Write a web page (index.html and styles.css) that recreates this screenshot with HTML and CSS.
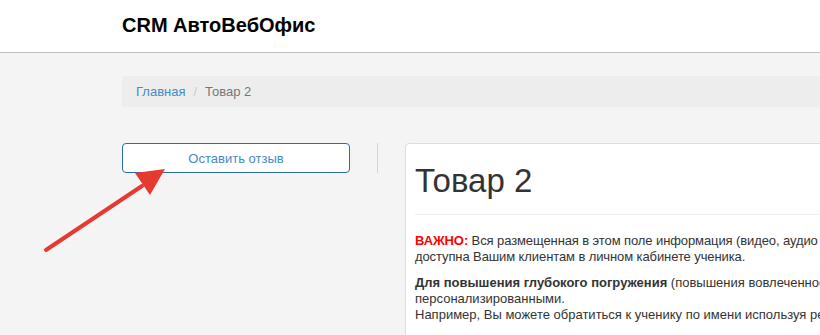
FILE: index.html
```html
<!DOCTYPE html>
<html lang="ru">
<head>
<meta charset="utf-8">
<title>CRM АвтоВебОфис</title>
<link rel="stylesheet" href="styles.css">
</head>
<body>
<header class="topbar">
  <div class="brand">CRM АвтоВебОфис</div>
</header>
<main class="page">
  <nav class="crumbs">
    <a class="crumb-link" href="#">Главная</a>
    <span class="crumb-sep">/</span>
    <span class="crumb-current">Товар 2</span>
  </nav>
  <div class="cols">
    <aside class="side">
      <button class="review-btn" type="button">Оставить отзыв</button>
    </aside>
    <div class="divider"></div>
    <section class="card">
      <h1 class="title">Товар 2</h1>
      <hr class="rule">
      <p class="para para-first"><b class="warn">ВАЖНО:</b> Вся размещенная в этом поле информация (видео, аудио и текст) будет доступна Вашим клиентам в личном кабинете ученика.</p>
      <p class="para para-second"><b>Для повышения глубокого погружения</b> (повышения вовлеченности) делайте материалы персонализированными.<br>Например, Вы можете обратиться к ученику по имени используя регулярные выражения.</p>
    </section>
  </div>
  <svg class="arrow" width="140" height="100" viewBox="0 0 140 100">
    <line x1="16" y1="90" x2="112" y2="26" stroke="#e63a30" stroke-width="4" stroke-linecap="round"/>
    <polygon points="135,9 105,13 120,35" fill="#e63a30"/>
  </svg>
</main>
</body>
</html>
```
FILE: styles.css
```css
html, body {
  margin: 0;
  padding: 0;
}
body {
  background: #f4f4f4;
  font-family: "Liberation Sans", Arial, sans-serif;
  font-size: 13px;
  color: #333;
  overflow: hidden;
  width: 820px;
  height: 335px;
}
.topbar {
  background: #fff;
  border-bottom: 1px solid #bdbdbd;
  box-sizing: border-box;
  height: 53px;
  display: flex;
  align-items: center;
  padding-left: 122px;
}
.brand {
  font-size: 20px;
  font-weight: bold;
  color: #000;
  margin-top: -2px;
}
.page {
  position: relative;
  padding: 23px 0 0 122px;
  overflow: hidden;
  height: 259px;
}
.crumbs {
  background: #ededed;
  border-radius: 4px 0 0 4px;
  height: 31px;
  display: flex;
  align-items: center;
  padding-left: 14px;
  gap: 8px;
  font-size: 13px;
}
.crumb-link {
  color: #428bca;
  text-decoration: none;
}
.crumb-sep {
  color: #ccc;
}
.crumb-current {
  color: #777;
}
.cols {
  display: flex;
  margin-top: 36px;
  align-items: flex-start;
}
.side {
  width: 228px;
  flex: none;
}
.review-btn {
  width: 228px;
  height: 30px;
  box-sizing: border-box;
  border: 1px solid #2e6da4;
  border-radius: 4px;
  background: #fff;
  color: #428bca;
  font-family: "Liberation Sans", Arial, sans-serif;
  font-size: 13px;
  padding: 0;
  cursor: pointer;
}
.divider {
  width: 1px;
  height: 30px;
  background: #d4d4d4;
  margin: 0 27px 0 27px;
  flex: none;
}
.card {
  flex: none;
  width: 680px;
  background: #fff;
  border: 1px solid #ddd;
  border-radius: 4px 0 0 0;
  padding: 0 0 20px 9px;
  height: 220px;
}
.title {
  margin: 17px 0 0 0;
  font-size: 33px;
  font-weight: normal;
  line-height: 40px;
  color: #333;
}
.rule {
  border: none;
  border-top: 1px solid #eee;
  margin: 13px 0 0 0;
}
.para {
  margin: 18px 0 0 0;
  line-height: 16px;
}
.para-first {
  width: 490px;
  letter-spacing: -0.1px;
}
.para-second {
  width: 640px;
  margin-top: 10px;
}
.warn {
  color: #f00;
}
.arrow {
  position: absolute;
  left: 30px;
  top: 107px;
}
```
